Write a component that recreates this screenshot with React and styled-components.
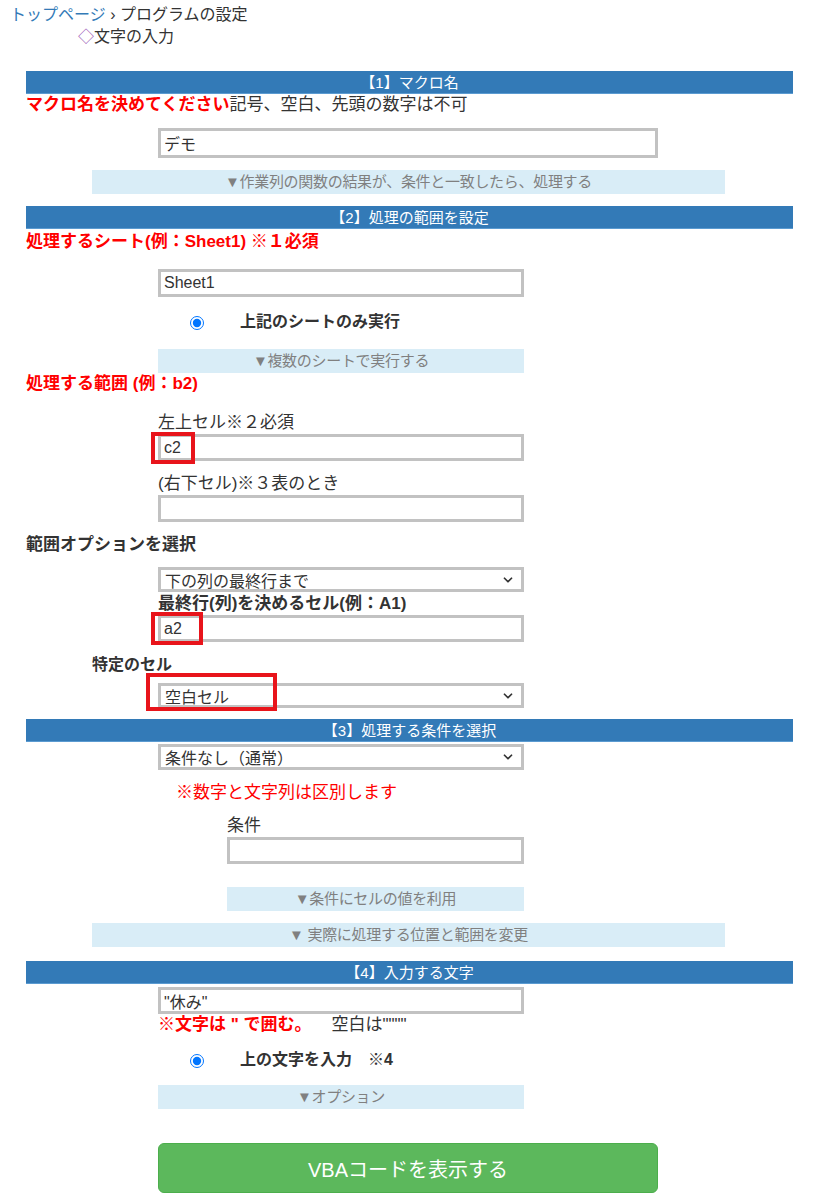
import React from 'react'
import styled, { createGlobalStyle } from 'styled-components'
import { ChevronDown } from 'lucide-react'

const Global = createGlobalStyle`
  body {
    margin: 0;
    background: #fff;
    font-family: "Liberation Sans", "Noto Sans CJK JP", sans-serif;
    font-size: 16px;
    color: #333;
  }
`

const Crumbs = styled.div`
  padding: 4px 0 0 10px;
  line-height: 22px;
  a {
    color: #337ab7;
    text-decoration: none;
  }
  .page {
    margin-left: 68px;
  }
  .dia {
    color: #9b59b6;
  }
`

const Form = styled.div`
  margin: 23px 0 0 26px;
  width: 767px;
  padding-bottom: 7px;
`

const Header = styled.div`
  height: 23px;
  margin-top: ${p => p.$mt || 0}px;
  background: #337ab7;
  border-bottom: 1px solid #5b9bd1;
  box-sizing: border-box;
  color: #fff;
  font-size: 15px;
  line-height: 23px;
  text-align: center;
`

const Line = styled.div`
  height: 22px;
  line-height: 22px;
  margin-top: ${p => p.$mt || 0}px;
  padding-left: ${p => p.$indent || 0}px;
  color: ${p => (p.$red ? '#ff0000' : '#333')};
  font-size: ${p => p.$size || 17}px;
  font-weight: ${p => (p.$bold ? 'bold' : 'normal')};
  white-space: nowrap;
`

const Red = styled.span`
  color: #ff0000;
  font-weight: bold;
`

const Gap = styled.span`
  display: inline-block;
  width: ${p => p.$w}px;
`

const Field = styled.div`
  position: relative;
  margin-top: ${p => p.$mt || 0}px;
  margin-left: ${p => p.$indent ?? 132}px;
  width: ${p => p.$w || 366}px;
  height: ${p => p.$h || 27}px;
`

const TextBox = styled.input`
  box-sizing: border-box;
  width: 100%;
  height: 100%;
  margin: 0;
  padding: 0 3px;
  border: 3px solid #c2c2c2;
  border-radius: 0;
  outline: none;
  background: #fff;
  font: inherit;
  font-size: 16px;
  color: #333;
`

const SelectBox = styled.div`
  box-sizing: border-box;
  width: 100%;
  height: 100%;
  padding: 0 5px 0 4px;
  border: 3px solid #c2c2c2;
  background: #fff;
  display: flex;
  align-items: center;
  justify-content: space-between;
  font-size: 16px;
  color: #333;
  svg {
    color: #333;
    margin-right: 1px;
  }
`

const Mark = styled.div`
  position: absolute;
  left: ${p => p.$l}px;
  top: ${p => p.$t}px;
  width: ${p => p.$w}px;
  height: ${p => p.$h}px;
  box-sizing: border-box;
  border: 4px solid #e8141b;
  pointer-events: none;
`

const Toggle = styled.div`
  margin-top: ${p => p.$mt || 0}px;
  margin-left: ${p => p.$indent}px;
  width: ${p => p.$w}px;
  height: 24px;
  line-height: 24px;
  background: #d9edf7;
  color: #808080;
  font-size: 15px;
  letter-spacing: -0.3px;
  text-align: center;
`

const RadioRow = styled.label`
  display: flex;
  align-items: center;
  height: ${p => p.$h || 40}px;
  margin-top: ${p => p.$mt || 0}px;
  padding-left: 164px;
  font-weight: bold;
  color: #333;
  input {
    margin: 6px 0 0 0;
    width: 14px;
    height: 14px;
    accent-color: #0075ff;
  }
  span {
    margin-left: 36px;
  }
  em {
    font-style: normal;
    margin-left: 16px;
  }
`

const Button = styled.button`
  display: block;
  box-sizing: border-box;
  margin: 34px 0 0 132px;
  width: 500px;
  height: 50px;
  background: #5cb85c;
  border: 1px solid #4cae4c;
  border-radius: 6px;
  color: #fff;
  font-family: inherit;
  font-size: 20px;
`

const Select = ({ value, children, ...rest }) => (
  <Field {...rest}>
    <SelectBox>
      <span>{value}</span>
      <ChevronDown size={14} strokeWidth={3} />
    </SelectBox>
    {children}
  </Field>
)

export default function App() {
  return (
    <>
      <Global />
      <Crumbs>
        <div>
          <a href="#">トップページ</a> › プログラムの設定
        </div>
        <div className="page">
          <span className="dia">◇</span>文字の入力
        </div>
      </Crumbs>
      <Form>
        <Header>【1】マクロ名</Header>
        <Line>
          <Red>マクロ名を決めてください</Red>記号、空白、先頭の数字は不可
        </Line>
        <Field $mt={12} $w={500} $h={30}>
          <TextBox defaultValue="デモ" readOnly />
        </Field>
        <Toggle $mt={12} $indent={66} $w={633}>
          ▼作業列の関数の結果が、条件と一致したら、処理する
        </Toggle>

        <Header $mt={12}>【2】処理の範囲を設定</Header>
        <Line $mt={2} $red $bold>
          処理するシート(例：Sheet1) ※１必須
        </Line>
        <Field $mt={16} $h={28}>
          <TextBox defaultValue="Sheet1" readOnly />
        </Field>
        <RadioRow $mt={3}>
          <input type="radio" checked readOnly />
          <span>上記のシートのみ実行</span>
        </RadioRow>
        <Toggle $mt={9} $indent={132} $w={366}>
          ▼複数のシートで実行する
        </Toggle>
        <Line $red $bold>
          処理する範囲 (例：b2)
        </Line>
        <Line $mt={17} $indent={132}>
          左上セル※２必須
        </Line>
        <Field>
          <TextBox defaultValue="c2" readOnly />
          <Mark $l={-7} $t={-2} $w={44} $h={32} />
        </Field>
        <Line $mt={12} $indent={132}>
          (右下セル)※３表のとき
        </Line>
        <Field>
          <TextBox readOnly />
        </Field>
        <Line $mt={12} $bold>
          範囲オプションを選択
        </Line>
        <Select $mt={11} $h={25} value="下の列の最終行まで" />
        <Line $mt={1} $indent={132} $bold>
          最終行(列)を決めるセル(例：A1)
        </Line>
        <Field>
          <TextBox defaultValue="a2" readOnly />
          <Mark $l={-7} $t={-3} $w={52} $h={33} />
        </Field>
        <Line $mt={12} $indent={66} $size={16} $bold>
          特定のセル
        </Line>
        <Select $mt={7} $h={25} value="空白セル">
          <Mark $l={-12} $t={-10} $w={131} $h={38} />
        </Select>

        <Header $mt={11}>【3】処理する条件を選択</Header>
        <Select $mt={2} $h={26} value="条件なし（通常）" />
        <Line $mt={12} $indent={150} $red>
          ※数字と文字列は区別します
        </Line>
        <Line $mt={11} $indent={201}>
          条件
        </Line>
        <Field $indent={201} $w={297}>
          <TextBox readOnly />
        </Field>
        <Toggle $mt={23} $indent={201} $w={297}>
          ▼条件にセルの値を利用
        </Toggle>
        <Toggle $mt={12} $indent={66} $w={633}>
          ▼ 実際に処理する位置と範囲を変更
        </Toggle>

        <Header $mt={14}>【4】入力する文字</Header>
        <Field $mt={3}>
          <TextBox defaultValue={'"休み"'} readOnly />
        </Field>
        <Line $indent={132}>
          <Red>※文字は " で囲む。</Red>
          <Gap $w={20} />
          空白は""""
        </Line>
        <RadioRow $mt={4} $h={36}>
          <input type="radio" checked readOnly />
          <span>上の文字を入力</span>
          <em>※4</em>
        </RadioRow>
        <Toggle $mt={9} $indent={132} $w={366}>
          ▼オプション
        </Toggle>
        <Button>VBAコードを表示する</Button>
      </Form>
    </>
  )
}
